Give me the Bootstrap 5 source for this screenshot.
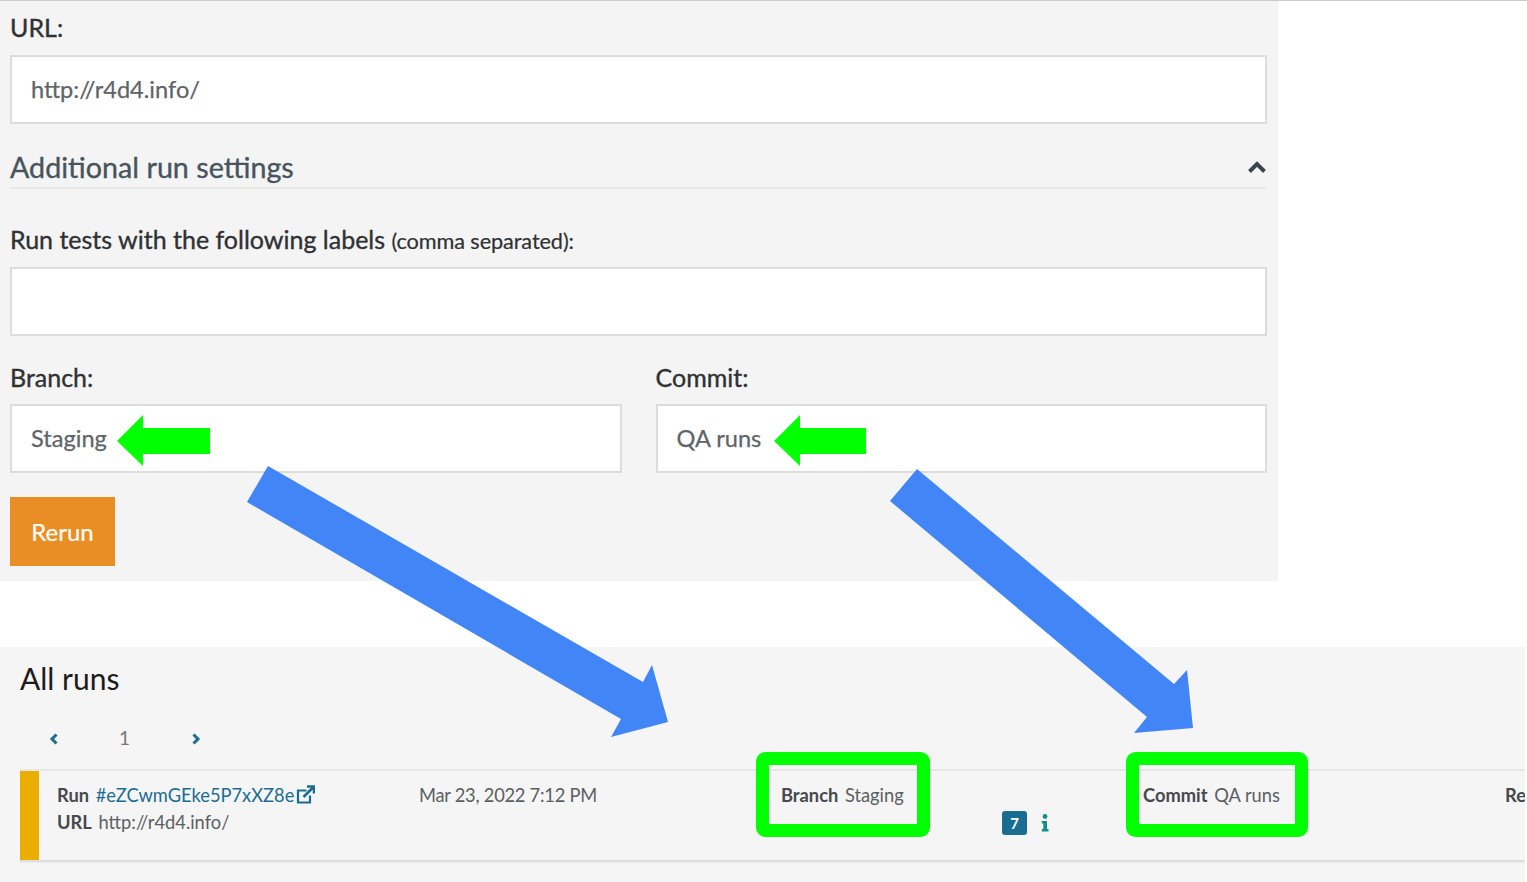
<!DOCTYPE html>
<html lang="en">
<head>
<meta charset="utf-8">
<title>Runs</title>
<link rel="stylesheet" href="https://cdn.jsdelivr.net/npm/bootstrap@5.3.0/dist/css/bootstrap.min.css">
<style>
html,body{margin:0;height:882px;overflow:hidden;background:#fff;font-family:"Lato","Liberation Sans",sans-serif;}
body{position:relative;width:1527px;}
.top-rule{border-top:1px solid #ccc;}
.panel-form{width:1278px;height:580px;background:#f4f4f4;padding:12px 11px 0 10px;}
.fld-label{display:block;font-size:25px;line-height:29px;color:#2f3133;margin:0 0 13px;-webkit-text-stroke:.35px #2f3133;}
.fld-label small{font-size:21.700px;-webkit-text-stroke:.2px #2f3133;letter-spacing:-.1px;}
.fld-input.form-control{height:69px;border:2px solid #dcdcdc;border-radius:0;background:#fff;color:#5f6468;font-size:23.600px;padding:0 19px 2px;box-shadow:none;-webkit-text-stroke:.25px #5f6468;}
.settings-head{display:flex;justify-content:space-between;align-items:center;margin-top:27px;height:38px;padding-bottom:4px;border-bottom:2px solid #e9e9e9;font-size:28.700px;line-height:34px;color:#48545c;-webkit-text-stroke:.35px #48545c;}
.lab-two{margin-top:36px;margin-bottom:11px;}
.lab-three{margin-top:27px;margin-bottom:12px;}
.two-col{--bs-gutter-x:34px;}
.run-btn.btn{display:block;width:105px;height:69px;margin-top:24px;background:#e88e25;border:0;border-radius:0;color:#fff;font-size:24px;padding:0;-webkit-text-stroke:.2px #fff;}
.panel-runs{width:1525px;height:235px;margin-top:66px;background:#f5f5f5;padding:13px 0 0 20px;overflow:hidden;}
.runs-title{font-size:30px;line-height:36px;color:#1c1c1c;margin:0;font-weight:400;}
.pager-line{height:36px;margin-top:22px;margin-left:-2px;display:flex;align-items:center;}
.pager-cell{width:71px;text-align:center;font-size:19px;color:#777;line-height:1;}
.pager-num{padding-top:2px;}
.run-row{width:1505px;height:93px;margin-top:15px;display:flex;border-top:2px solid #e6e6e6;border-bottom:2px solid #dedede;box-shadow:0 1px 1px #eee;}
.run-flag{width:19px;flex:none;background:#e9ae00;}
.run-cols{display:grid;grid-template-columns:repeat(4,362px) 100px;padding-left:18px;padding-top:11px;font-size:18.300px;line-height:27px;color:#5b5f63;white-space:nowrap;}
.run-cols b{font-weight:700;color:#46494d;margin-right:2px;}
.run-cols a{color:#1b6d91;text-decoration:none;}
.ext-mark{margin-left:2px;vertical-align:-2px;}
.run-date{letter-spacing:-.25px;}
.flag-line{display:flex;align-items:center;height:27px;margin-left:221px;gap:14px;}
.num-pill{width:25px;height:24px;border-radius:3px;background:#1a6c91;color:#fff;font-size:15px;font-weight:700;line-height:24px;text-align:center;}
.anno-layer{position:absolute;left:0;top:0;pointer-events:none;}
</style>
</head>
<body>
<div class="top-rule"></div>
<form class="panel-form">
  <label class="fld-label">URL:</label>
  <input class="form-control fld-input" value="http://r4d4.info/">
  <div class="settings-head"><span>Additional run settings</span>
    <svg width="20" height="14" viewBox="0 0 20 14"><path d="M2.500 11.500 10 4l7.500 7.500" fill="none" stroke="#37474f" stroke-width="4"/></svg>
  </div>
  <label class="fld-label lab-two">Run tests with the following labels <small>(comma separated):</small></label>
  <input class="form-control fld-input">
  <div class="row two-col">
    <div class="col-6">
      <label class="fld-label lab-three">Branch:</label>
      <input class="form-control fld-input" value="Staging">
    </div>
    <div class="col-6">
      <label class="fld-label lab-three">Commit:</label>
      <input class="form-control fld-input" value="QA runs">
    </div>
  </div>
  <button type="button" class="btn run-btn">Rerun</button>
</form>
<section class="panel-runs">
  <h2 class="runs-title">All runs</h2>
  <div class="pager-line">
    <div class="pager-cell"><svg width="12" height="14" viewBox="0 0 12 14"><path d="M8.500 2.500 4 7l4.500 4.500" fill="none" stroke="#1b6d91" stroke-width="3"/></svg></div>
    <div class="pager-cell pager-num">1</div>
    <div class="pager-cell"><svg width="12" height="14" viewBox="0 0 12 14"><path d="M3.500 2.500 8 7l-4.500 4.500" fill="none" stroke="#1b6d91" stroke-width="3"/></svg></div>
  </div>
  <div class="run-row">
    <div class="run-flag"></div>
    <div class="run-cols">
      <div>
        <div><b>Run</b> <a href="#">#eZCwmGEke5P7xXZ8e<svg class="ext-mark" width="19" height="19" viewBox="0 0 19 19"><path d="M14 10.500v7H2V5.500h8.500" fill="none" stroke="#1b6d91" stroke-width="2.200"/><path d="M7.500 12 17 2.500M11 1.500h7V8.500" fill="none" stroke="#1b6d91" stroke-width="2.600"/></svg></a></div>
        <div><b>URL</b> http://r4d4.info/</div>
      </div>
      <div class="run-date">Mar 23, 2022 7:12 PM</div>
      <div>
        <div><b>Branch</b> Staging</div>
        <div class="flag-line"><span class="num-pill">7</span>
          <svg width="8" height="18" viewBox="0 0 8 18"><circle cx="4" cy="2.500" r="2.400" fill="#12908a"/><path d="M.8 7H6v8h1.500v2.500H.8V15h1.500V9.500H.8z" fill="#12908a"/></svg>
        </div>
      </div>
      <div><b>Commit</b> QA runs</div>
      <div><b>Re</b></div>
    </div>
  </div>
</section>
<svg class="anno-layer" width="1527" height="882" viewBox="0 0 1527 882">
  <polygon fill="#00ff00" points="117,441 143,415 143,428 210,428 210,454 143,454 143,466"/>
  <polygon fill="#00ff00" points="774,441 800,415 800,428 866,428 866,454 800,454 800,466"/>
  <polygon fill="#4285f6" points="268,466 643,682 652,665 668,722 611,737 621,719 247,502"/>
  <polygon fill="#4285f6" points="917,469 1174,684 1187,670 1193,728 1134,733 1147,717 890,501"/>
  <rect x="762.500" y="758.500" width="161" height="72" rx="3" fill="none" stroke="#00ff00" stroke-width="13"/>
  <rect x="1132.500" y="758.500" width="169" height="72" rx="3" fill="none" stroke="#00ff00" stroke-width="13"/>
</svg>
</body>
</html>
